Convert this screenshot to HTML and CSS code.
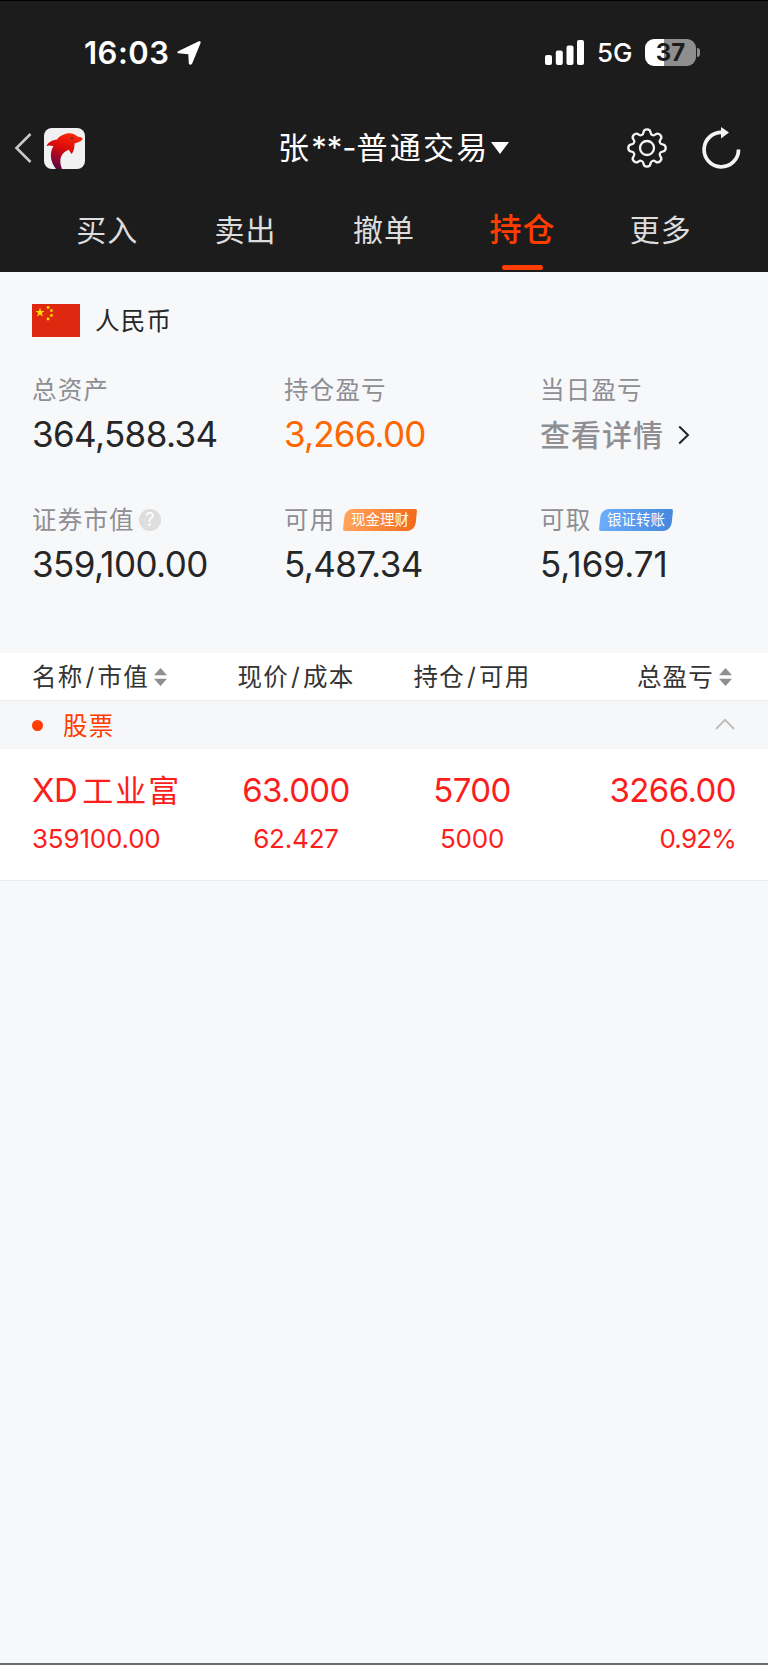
FILE: index.html
```
<!DOCTYPE html>
<html lang="zh-CN">
<head>
    <meta charset="UTF-8">
    <meta name="viewport" content="width=device-width, initial-scale=1.0">
    <title>持仓</title>
    <link rel="stylesheet" href="styles.css">
</head>
<body>
    <header class="header">
        <div class="status-bar">
            <span class="time">16:03</span>
            <svg class="location" width="26" height="26" viewBox="0 0 26 26">
                <path d="M2.2 11.2 L22.8 1.3 Q25.2 .6 24.6 3 L16.2 23.6 Q14.4 26 12.8 23.8 L12.3 14.2 L2.4 13.3 Q.4 12.4 2.2 11.2Z" fill="#fff"/>
            </svg>
            <svg class="signal" width="39" height="25" viewBox="0 0 39 25" fill="#fff">
                <rect x="0" y="15" width="7" height="10" rx="2"/>
                <rect x="10.8" y="10.5" width="7" height="14.5" rx="2"/>
                <rect x="21.5" y="5.5" width="7" height="19.5" rx="2"/>
                <rect x="32" y="0" width="7" height="25" rx="2"/>
            </svg>
            <span class="network">5G</span>
            <span class="battery">37</span>
            <span class="battery-tip"></span>
        </div>

        <div class="nav">
            <svg class="back" width="18" height="32" viewBox="0 0 18 32">
                <path d="M16.5 2 L2.5 16 L16.5 30" fill="none" stroke="#c8c8c8" stroke-width="2.6"/>
            </svg>
            <svg class="logo" width="41" height="41" viewBox="0 0 41 41">
                <defs>
                    <linearGradient id="dolphin" x1=".7" y1="0" x2=".3" y2="1">
                        <stop offset="0" stop-color="#fb2a08"/>
                        <stop offset=".45" stop-color="#d90a0c"/>
                        <stop offset="1" stop-color="#5a0548"/>
                    </linearGradient>
                </defs>
                <rect width="41" height="41" rx="8" fill="#f1f1f1"/>
                <path d="M2.5 18 C4 14.5 8 12 13 11.5 C17 6.5 24 4 29.5 6 C31 6.6 32.5 8 34 8.8 C36.5 9 38.6 9.6 38.6 10.8 C38 13 34.5 14.6 30.5 15.4 C30.8 19 29.8 23 27.7 26 C26.6 24.5 25.6 23.5 25.2 21.8 C17.5 24 14 31 18 41 L12 41 C6.5 34 5 25 9.5 18.3 C7 17.3 4.5 17.3 2.5 18Z" fill="url(#dolphin)"/>
                <circle cx="28" cy="10.3" r="1.2" fill="#6b3030"/>
            </svg>
            <h1 class="title">张<span class="mask">**-</span>普通交易</h1>
            <svg class="caret" width="18" height="12" viewBox="0 0 18 12">
                <path d="M0 0 H18 L9 12Z" fill="#fff"/>
            </svg>
            <svg class="settings" width="42" height="42" viewBox="-21 -21 42 42" fill="none" stroke="#f4f4f4" stroke-width="2.3" stroke-linejoin="round">
                <path id="gear" d=""/>
                <circle r="7"/>
            </svg>
            <svg class="refresh" width="39" height="42" viewBox="0 0 39 42">
                <path d="M21 5.5 A17.2 17.2 0 1 0 36.5 22.5" fill="none" stroke="#f4f4f4" stroke-width="3.7"/>
                <path d="M19 0 L27 5.5 L19 11.5Z" fill="#f4f4f4"/>
            </svg>
        </div>

        <nav class="tabs">
            <a class="tab">买入</a>
            <a class="tab">卖出</a>
            <a class="tab">撤单</a>
            <a class="tab active">持仓</a>
            <a class="tab">更多</a>
        </nav>
    </header>

    <section class="summary">
        <div class="currency">
            <svg class="flag" width="48" height="33" viewBox="0 0 48 33">
                <rect width="48" height="33" fill="#de2910"/>
                <g fill="#ffde00">
                    <path d="M8 3.6 L9.1 7 H12.6 L9.8 9.1 L10.9 12.5 L8 10.4 L5.1 12.5 L6.2 9.1 L3.4 7 H6.9Z"/>
                    <circle cx="16" cy="3.4" r="1.4"/>
                    <circle cx="19.4" cy="6.6" r="1.4"/>
                    <circle cx="19.4" cy="11.4" r="1.4"/>
                    <circle cx="16" cy="15" r="1.4"/>
                </g>
            </svg>
            <span>人民币</span>
        </div>

        <div class="stats">
            <div class="stat">
                <div class="label">总资产</div>
                <div class="value">364,588.34</div>
            </div>
            <div class="stat">
                <div class="label">持仓盈亏</div>
                <div class="value profit">3,266.00</div>
            </div>
            <div class="stat">
                <div class="label">当日盈亏</div>
                <div class="value detail">查看详情
                    <svg width="12" height="20" viewBox="0 0 12 20">
                        <path d="M1.2 1.5 L10 10 L1.2 18.5" fill="none" stroke="#222" stroke-width="2"/>
                    </svg>
                </div>
            </div>
            <div class="stat">
                <div class="label">证券市值<span class="help">?</span></div>
                <div class="value">359,100.00</div>
            </div>
            <div class="stat">
                <div class="label">可用<span class="badge orange"><span>现金理财</span></span></div>
                <div class="value">5,487.34</div>
            </div>
            <div class="stat">
                <div class="label">可取<span class="badge blue"><span>银证转账</span></span></div>
                <div class="value withdraw">5,169.71</div>
            </div>
        </div>
    </section>

    <section class="positions">
        <div class="row head">
            <div class="cell">名称<i>/</i>市值
                <svg class="sort" width="13" height="18" viewBox="0 0 13 18" fill="#8e8e93">
                    <path d="M6.5 0 L13 7.3 H0Z M0 10.7 H13 L6.5 18Z"/>
                </svg>
            </div>
            <div class="cell">现价<i>/</i>成本</div>
            <div class="cell">持仓<i>/</i>可用</div>
            <div class="cell">总盈亏
                <svg class="sort" width="13" height="18" viewBox="0 0 13 18" fill="#8e8e93">
                    <path d="M6.5 0 L13 7.3 H0Z M0 10.7 H13 L6.5 18Z"/>
                </svg>
            </div>
        </div>
        <div class="group">
            <span class="dot"></span>
            <span>股票</span>
            <svg class="fold" width="20" height="12" viewBox="0 0 20 12">
                <path d="M1 11 L10 1.8 L19 11" fill="none" stroke="#bbb" stroke-width="1.8"/>
            </svg>
        </div>
        <div class="row stock">
            <div class="cell"><b>XD<em>工业富</em></b><small>359100.00</small></div>
            <div class="cell"><b>63.000</b><small>62.427</small></div>
            <div class="cell"><b>5700</b><small>5000</small></div>
            <div class="cell"><b>3266.00</b><small class="rate">0.92%</small></div>
        </div>
    </section>

    <script>
        // gear outline: eight round teeth joined by round notches
        const at = (deg) => {
            const a = deg * Math.PI / 180;
            return (15.9 * Math.sin(a)).toFixed(2) + " " + (-15.9 * Math.cos(a)).toFixed(2);
        };
        let d = "M" + at(-13);
        for (let i = 0; i < 8; i++) {
            d += " A3.6 3.6 0 0 1 " + at(i * 45 + 13);
            d += " A2.9 2.9 0 0 0 " + at(i * 45 + 32);
        }
        document.getElementById("gear").setAttribute("d", d + "Z");
    </script>
</body>
</html>
```
FILE: styles.css
```
* {
    margin: 0;
    padding: 0;
    box-sizing: border-box;
}

body {
    display: flex;
    flex-direction: column;
    height: 1665px;
    background: #f7f8fa;
    border-bottom: 2px solid #6b6b6d;
    font-family: Inter, "Noto Sans CJK SC", sans-serif;
    color: #262626;
    overflow: hidden;
}

svg {
    flex: none;
    display: block;
}

.header {
    height: 272px;
    background: #1c1c1c;
    border-top: 1px solid #000;
    color: #fff;
}

.status-bar {
    display: flex;
    align-items: center;
    height: 103px;
    padding-left: 84px;
}

.time {
    width: 92px;
    font-size: 31px;
    line-height: 40px;
    font-weight: 600;
    letter-spacing: 0.5px;
}

.signal {
    margin-left: 343px;
}

.network {
    width: 48px;
    margin-left: 13px;
    padding-top: 1px;
    font-size: 26px;
    font-weight: 500;
    line-height: 30px;
}

.battery {
    width: 51px;
    height: 27px;
    border-radius: 9px;
    background: linear-gradient(90deg, #fff 19px, #8e8e8e 19px);
    color: #1c1c1c;
    font-size: 24px;
    font-weight: 700;
    line-height: 27px;
    text-align: center;
}

.battery-tip {
    width: 3px;
    height: 9px;
    margin-left: 1px;
    border-radius: 0 3px 3px 0;
    background: #8e8e8e;
}

.nav {
    display: flex;
    align-items: center;
    height: 88px;
    padding-left: 14px;
}

.logo {
    margin-left: 12px;
}

.title {
    width: 213px;
    margin-left: 193px;
    font-size: 31px;
    font-weight: 400;
    line-height: 40px;
    letter-spacing: 2.2px;
    white-space: nowrap;
}

.mask {
    letter-spacing: 0;
}

.settings {
    margin-left: 117px;
}

.refresh {
    margin-left: 34px;
}

.tabs {
    display: flex;
    height: 80px;
    padding: 0 38px;
}

.tab {
    flex: 1;
    display: flex;
    flex-direction: column;
    align-items: center;
    color: #ddd;
    font-size: 30px;
    line-height: 76px;
    letter-spacing: 1px;
}

.tab.active {
    color: #ff3d00;
    font-size: 32px;
    font-weight: 500;
}

.tab.active::after {
    content: "";
    width: 41px;
    height: 5px;
    margin-top: -3px;
    border-radius: 3px;
    background: #ff3d00;
}

.summary {
    height: 381px;
    padding: 32px 32px 0;
}

.currency {
    display: flex;
    align-items: center;
    gap: 15px;
    height: 33px;
    font-size: 24.5px;
    letter-spacing: 1.2px;
}

.currency span {
    padding-bottom: 3px;
}

.stats {
    display: grid;
    grid-template-columns: 252px 256px 1fr;
    row-gap: 42px;
    margin-top: 31px;
}

.stat {
    height: 88px;
}

.label {
    display: flex;
    align-items: center;
    height: 44px;
    padding-bottom: 4px;
    color: #8e8e93;
    font-size: 24.5px;
    letter-spacing: 1.2px;
}

.value {
    height: 44px;
    font-size: 35px;
    line-height: 44px;
    letter-spacing: -0.6px;
}

.value.withdraw {
    letter-spacing: 0;
}

.value.profit {
    color: #ff6600;
    letter-spacing: -0.8px;
}

.value.detail {
    display: flex;
    align-items: center;
    gap: 14px;
    padding-top: 2px;
    color: #8e8e93;
    font-size: 30px;
    font-weight: 500;
    letter-spacing: 1px;
}

.help {
    width: 22px;
    height: 22px;
    margin: 4px 0 0 4px;
    border-radius: 50%;
    background: #dedede;
    color: #fff;
    font-size: 18px;
    line-height: 22px;
    text-align: center;
    letter-spacing: 0;
}

.badge {
    width: 72px;
    height: 22px;
    margin: 4px 0 0 9px;
    border-radius: 8px 2px 8px 2px;
    color: #fff;
    font-size: 14.5px;
    line-height: 21px;
    letter-spacing: 0;
    text-align: center;
    transform: skewX(-6deg);
}

.badge span {
    display: block;
    transform: skewX(6deg);
}

.badge.orange {
    background: linear-gradient(90deg, #ffa55c, #f56a1c);
}

.badge.blue {
    background: linear-gradient(90deg, #6cadfb, #4688dd);
}

.row {
    display: grid;
    grid-template-columns: repeat(4, 1fr);
    padding: 0 32px;
    background: #fff;
    text-align: center;
}

.row .cell:first-child {
    justify-content: flex-start;
    text-align: left;
}

.row .cell:last-child {
    justify-content: flex-end;
    text-align: right;
}

.head {
    height: 48px;
    border-bottom: 1px solid #ececee;
}

.head .cell {
    display: flex;
    align-items: center;
    justify-content: center;
    padding-bottom: 2px;
    color: #333;
    font-size: 24.5px;
    letter-spacing: 1.2px;
    white-space: nowrap;
}

.head i {
    margin: 0 2px;
    font-style: normal;
}

.sort {
    margin: 2px 4px 0 5px;
}

.group {
    display: flex;
    align-items: center;
    height: 48px;
    padding: 0 33px 0 32px;
    background: #f6f7f9;
    color: #ff3d00;
    font-size: 24.5px;
    letter-spacing: 1.2px;
}

.group span:nth-child(2) {
    padding-bottom: 2px;
}

.dot {
    width: 11px;
    height: 11px;
    margin-right: 20px;
    border-radius: 50%;
    background: #ff3d00;
}

.fold {
    margin-left: auto;
    margin-bottom: 2px;
}

.stock {
    height: 132px;
    padding-top: 16px;
    border-bottom: 1px solid #ececee;
    color: #fc1d1d;
}

.stock b {
    display: block;
    height: 50px;
    font-size: 33px;
    font-weight: 400;
    line-height: 50px;
    letter-spacing: -0.6px;
    white-space: nowrap;
}

.stock em {
    margin-left: 5px;
    font-size: 31px;
    font-style: normal;
    letter-spacing: 2px;
}

.stock small {
    display: block;
    font-size: 26px;
    line-height: 48px;
    letter-spacing: -0.2px;
}

.stock .rate {
    letter-spacing: -0.8px;
}
```
